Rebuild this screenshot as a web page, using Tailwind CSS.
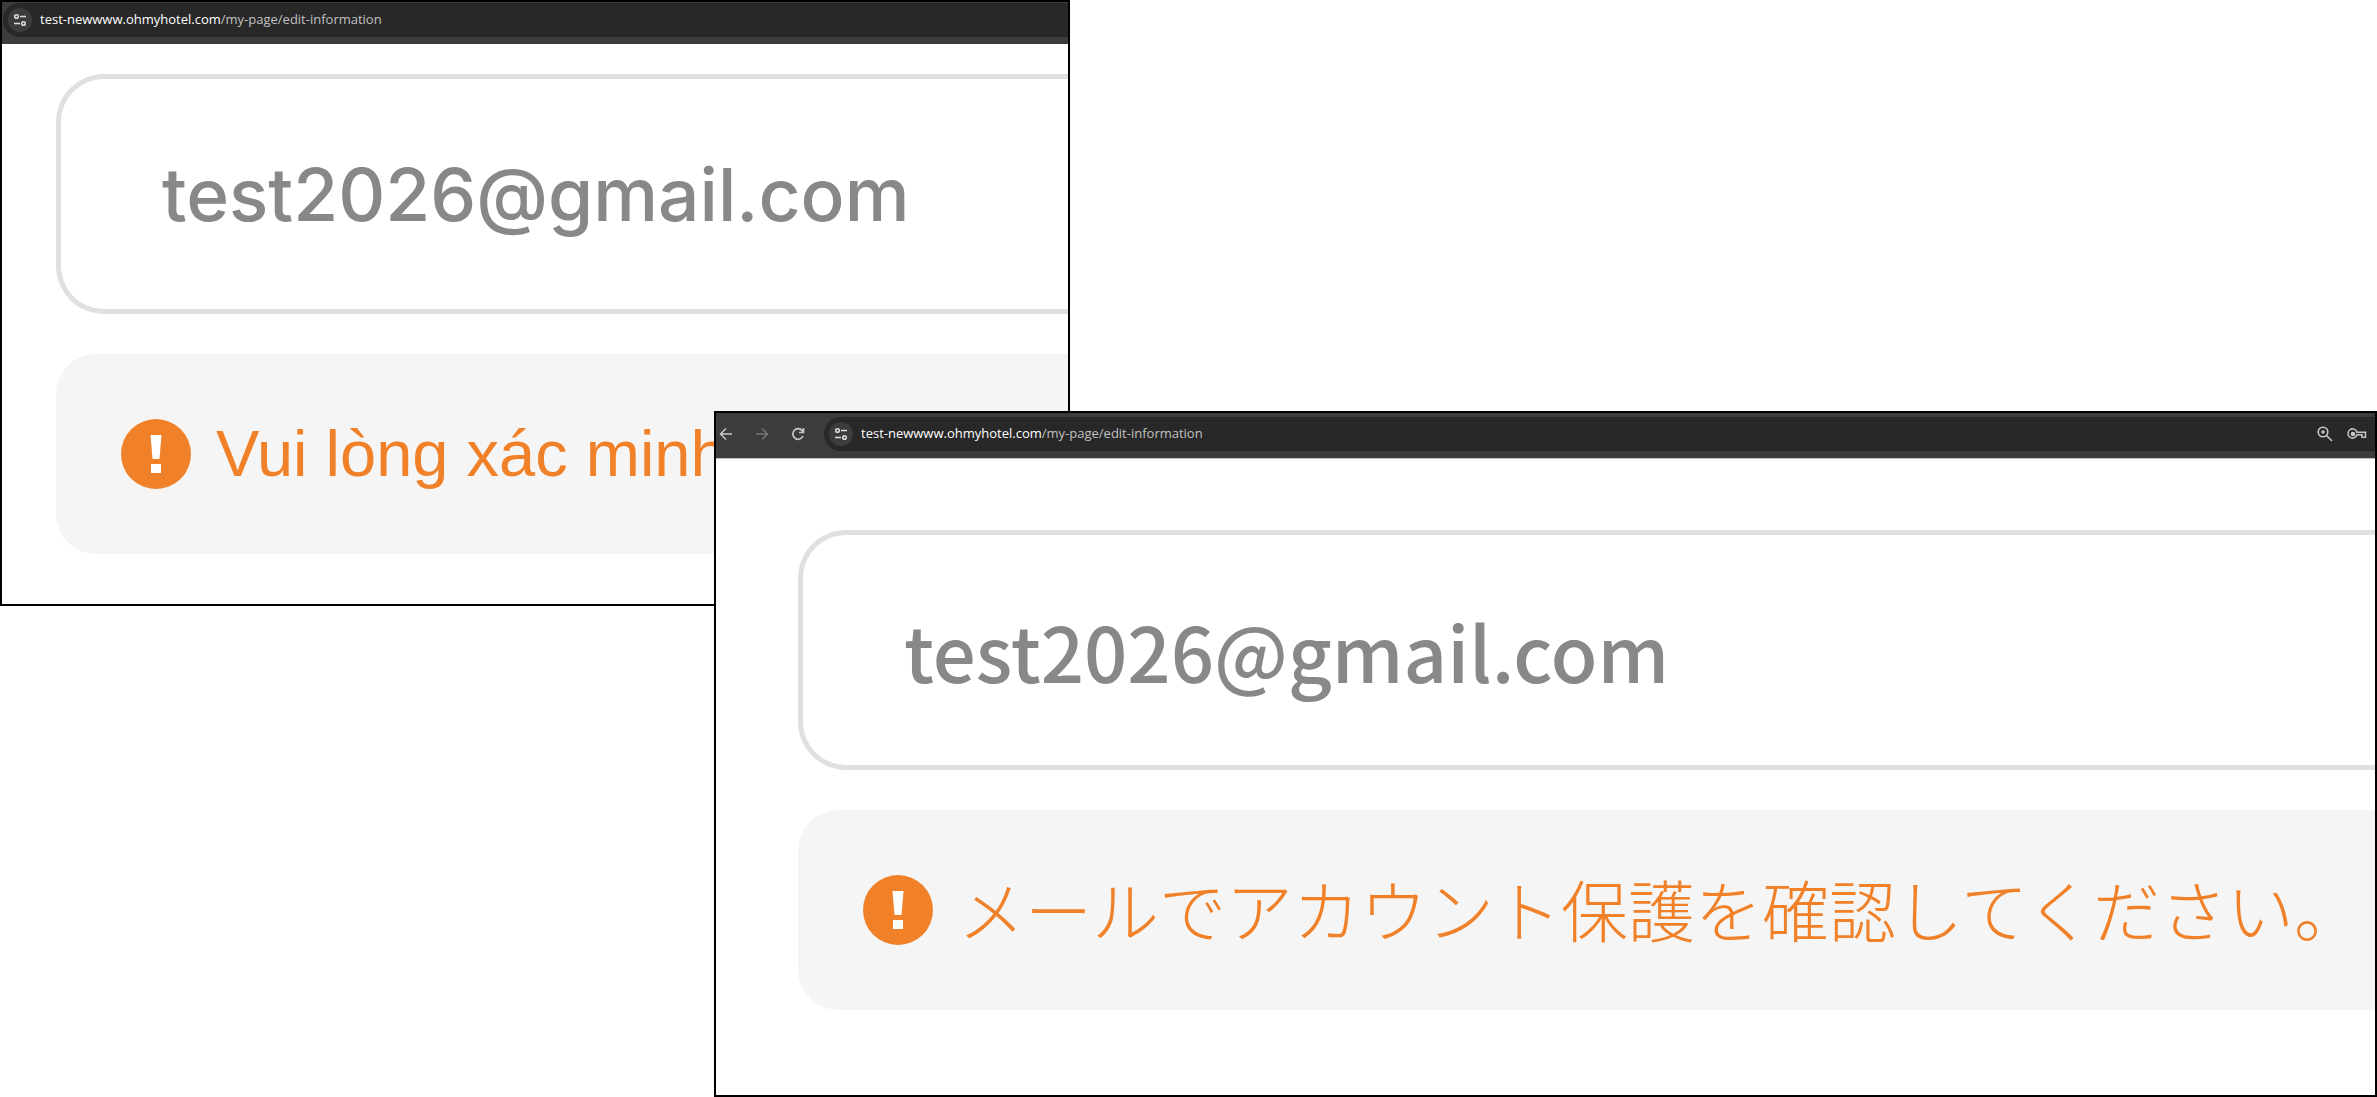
<!DOCTYPE html>
<html lang="vi">
<head>
    <meta charset="UTF-8">
    <meta name="viewport" content="width=device-width, initial-scale=1.0">
    <title>Edit information</title>
    <script src="https://cdn.jsdelivr.net/npm/@tailwindcss/browser@4"></script>
</head>
<body class="bg-white">
    <main class="relative min-h-screen overflow-hidden">

        <!-- Vietnamese window -->
        <section class="absolute top-0 left-0 w-[45%] border-2 border-black bg-white overflow-hidden">
            <header class="h-[42px] bg-[#3c3c3c] pt-px pl-px">
                <div class="h-[34px] flex items-center gap-2 pl-[5px] rounded-l-full bg-[#282828]">
                    <button type="button" aria-label="Site information" class="size-6 flex items-center justify-center rounded-full bg-[#3c3c3c] text-[#dedede]">
                        <svg class="size-4" viewBox="0 0 16 16" fill="none" stroke="currentColor" stroke-width="1.5">
                            <circle cx="4.5" cy="4.5" r="1.8"/><path d="M8 4.5h6M2 11.5h6"/><circle cx="11.5" cy="11.5" r="1.8"/>
                        </svg>
                    </button>
                    <a href="#" class="text-[13px] text-[#c0c0c0] font-['Open_Sans','Noto_Sans',sans-serif]"><span class="text-white">test-newwww.ohmyhotel.com</span>/my-page/edit-information</a>
                </div>
            </header>
            <div class="pt-[30px] pb-[50px] pl-[54px]">
                <input type="email" aria-label="Email" value="test2026@gmail.com" readonly
                       class="block w-full h-[240px] mb-10 pl-[101px] rounded-l-[48px] border-[5px] border-r-0 border-[#e0e0e0] text-[73px] font-medium text-[#888888] outline-none font-['Inter',sans-serif]">
                <div class="h-[200px] flex items-center gap-[25px] pl-[65px] rounded-l-[40px] bg-[#f5f5f5] text-[#f08129]">
                    <svg class="size-[70px] shrink-0" viewBox="0 0 70 70">
                        <circle cx="35" cy="35" r="35" fill="currentColor"/>
                        <path fill="#fff" d="M29.5 16h11l-2 24h-7zM30 45h10v9H30z"/>
                    </svg>
                    <p class="text-[65px] whitespace-nowrap font-['Liberation_Sans',sans-serif]">Vui lòng xác minh</p>
                </div>
            </div>
        </section>

        <!-- Japanese window -->
        <section lang="ja" class="absolute top-[411px] left-[714px] right-0 border-2 border-black bg-white overflow-hidden font-['Noto_Sans_CJK_JP',sans-serif]">
            <header class="h-[46px] flex items-start bg-[#3c3c3c] pt-1 border-b border-[#c0c0c0]">
                <div class="h-[34px] w-[108px] shrink-0 flex items-center gap-4 text-[#c7c7c7]">
                    <button type="button" aria-label="Back" class="size-5 flex items-center justify-center">
                        <svg class="size-4" viewBox="0 0 16 16" fill="none" stroke="currentColor" stroke-width="1.5"><path d="M14 8H3M8 2.5L2.5 8L8 13.5"/></svg>
                    </button>
                    <button type="button" aria-label="Forward" class="size-5 flex items-center justify-center text-[#757575]">
                        <svg class="size-4" viewBox="0 0 16 16" fill="none" stroke="currentColor" stroke-width="1.5"><path d="M2 8h11M8 2.5L13.5 8L8 13.5"/></svg>
                    </button>
                    <button type="button" aria-label="Reload" class="size-5 flex items-center justify-center">
                        <svg class="size-4" viewBox="0 0 16 16" fill="none" stroke="currentColor" stroke-width="1.7"><path d="M13 10A5.3 5.3 0 1 1 12.2 4.6L13.5 6M13.5 2v4.5H9"/></svg>
                    </button>
                </div>
                <div class="h-[34px] grow flex items-center gap-2 pl-[5px] pr-2 rounded-l-full bg-[#282828]">
                    <button type="button" aria-label="Site information" class="size-6 flex items-center justify-center rounded-full bg-[#3c3c3c] text-[#dedede]">
                        <svg class="size-4" viewBox="0 0 16 16" fill="none" stroke="currentColor" stroke-width="1.5">
                            <circle cx="4.5" cy="4.5" r="1.8"/><path d="M8 4.5h6M2 11.5h6"/><circle cx="11.5" cy="11.5" r="1.8"/>
                        </svg>
                    </button>
                    <a href="#" class="text-[13px] text-[#c0c0c0] font-['Open_Sans','Noto_Sans',sans-serif]"><span class="text-white">test-newwww.ohmyhotel.com</span>/my-page/edit-information</a>
                    <div class="ml-auto flex items-center gap-3 text-[#c7c7c7]">
                        <button type="button" aria-label="Zoom">
                            <svg class="size-5" viewBox="0 0 20 20" fill="none" stroke="currentColor" stroke-width="1.6"><circle cx="8" cy="8" r="4.8"/><path d="M11.5 11.5l5.5 5.5"/><circle cx="8" cy="8" r="1.8" fill="currentColor" stroke="none"/></svg>
                        </button>
                        <button type="button" aria-label="Passwords">
                            <svg class="size-5" viewBox="0 0 20 20" fill="none" stroke="currentColor" stroke-width="1.5"><path d="M10 8.2h8.5v5h-3.5v-2.4H10A4.6 4.6 0 1 1 10 8.2z"/><circle cx="6" cy="10" r="1.6" fill="currentColor"/></svg>
                        </button>
                    </div>
                </div>
            </header>
            <div class="pt-[71px] pb-[85px] pl-[82px]">
                <input type="email" aria-label="メール" value="test2026@gmail.com" readonly
                       class="block w-full h-[240px] mb-10 pl-[101px] rounded-l-[48px] border-[5px] border-r-0 border-[#e0e0e0] text-[76px] font-medium text-[#888888] outline-none">
                <div class="h-[200px] flex items-center gap-[25px] pl-[65px] rounded-l-[40px] bg-[#f5f5f5] text-[#f08129]">
                    <svg class="size-[70px] shrink-0" viewBox="0 0 70 70">
                        <circle cx="35" cy="35" r="35" fill="currentColor"/>
                        <path fill="#fff" d="M29.5 16h11l-2 24h-7zM30 45h10v9H30z"/>
                    </svg>
                    <p class="pb-1 text-[67px] font-light whitespace-nowrap">メールでアカウント保護を確認してください。</p>
                </div>
            </div>
        </section>

    </main>
</body>
</html>
